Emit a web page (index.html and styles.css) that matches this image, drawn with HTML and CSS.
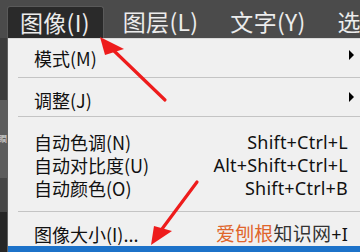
FILE: index.html
```html
<!DOCTYPE html>
<html>
<head>
<meta charset="utf-8">
<link rel="stylesheet" href="styles.css">
</head>
<body>
<div class="screen">
  <div class="menubar">
    <div class="top-item active">图像(I)</div>
    <div class="top-item">图层(L)</div>
    <div class="top-item">文字(Y)</div>
    <div class="top-item">选</div>
  </div>
  <div class="main">
    <div class="sidebar">
      <div class="band b1"></div>
      <div class="band b2"><span class="vtext">瞷</span></div>
      <div class="band b3"></div>
      <div class="band b4"></div>
    </div>
    <div class="menu">
      <div class="row"><span>模式(M)</span><span class="sub"></span></div>
      <div class="sep sep-1"></div>
      <div class="row"><span>调整(J)</span><span class="sub"></span></div>
      <div class="sep sep-2"></div>
      <div class="row"><span>自动色调(N)</span><span class="key">Shift+Ctrl+L</span></div>
      <div class="row"><span>自动对比度(U)</span><span class="key">Alt+Shift+Ctrl+L</span></div>
      <div class="row"><span>自动颜色(O)</span><span class="key">Shift+Ctrl+B</span></div>
      <div class="sep sep-3"></div>
      <div class="row"><span>图像大小(I)...</span><span class="key"><span class="wm-a">爱刨根</span><span class="wm-b">知识网</span>+I</span></div>
      <div class="selected"></div>
    </div>
  </div>
  <svg class="arrows" width="360" height="252" viewBox="0 0 360 252">
    <line x1="165" y1="100" x2="110" y2="47" stroke="#ee1c1c" stroke-width="3.2" stroke-linecap="round"/>
    <polygon points="100,37 105,55 124,49" fill="#ee1c1c"/>
    <line x1="197" y1="182" x2="159" y2="233" stroke="#ee1c1c" stroke-width="3.2" stroke-linecap="round"/>
    <polygon points="151,245 154,226 172,231" fill="#ee1c1c"/>
  </svg>
</div>
</body>
</html>
```

FILE: styles.css
```css
* { box-sizing: border-box; }
html, body { margin: 0; padding: 0; }
body {
  width: 360px;
  height: 252px;
  overflow: hidden;
  background: #3a3a3a;
  font-family: "Noto Sans CJK SC", "Noto Sans", sans-serif;
}
.screen {
  position: relative;
  width: 360px;
  height: 252px;
  display: flex;
  flex-direction: column;
  overflow: hidden;
}
.menubar {
  height: 38px;
  flex: none;
  background: #4b4b4b;
  display: flex;
  align-items: flex-end;
  padding-left: 7px;
  overflow: hidden;
}
.top-item {
  height: 32px;
  line-height: 31px;
  padding: 0 16px;
  font-size: 23px;
  letter-spacing: 0.3px;
  color: #ececec;
  white-space: nowrap;
  flex: none;
}
.top-item.active {
  background: #2a2a2a;
  border: 1px solid #5a5a5a;
  border-bottom: none;
  border-radius: 3px 3px 0 0;
  padding: 0 13px 0 12px;
  margin-right: 3px;
}
.main {
  flex: 1;
  display: flex;
  min-height: 0;
}
.sidebar {
  width: 8px;
  flex: none;
  display: flex;
  flex-direction: column;
  background: #2e2e2e;
  border-right: 1px solid #606060;
}
.band { width: 7px; }
.b1 { height: 62px; background: #3c3c3c; }
.b2 { height: 78px; background: #5c5c5c; display: flex; align-items: center; overflow: hidden; }
.b3 { height: 34px; background: #464646; }
.b4 { flex: 1; background: #262626; }
.vtext { font-size: 8px; color: #dcdcdc; line-height: 1; margin-left: -1px; }
.menu {
  flex: 1;
  background: #f0f0f0;
  border-top: 1px solid #dadada;
  padding-top: 7px;
  display: flex;
  flex-direction: column;
  position: relative;
}
.row {
  height: 23px;
  line-height: 22px;
  display: flex;
  align-items: center;
  justify-content: space-between;
  padding-left: 26px;
  padding-right: 12px;
  font-size: 18px;
  color: #111;
  white-space: nowrap;
  flex: none;
}
.sub {
  width: 0;
  height: 0;
  border-top: 5px solid transparent;
  border-bottom: 5px solid transparent;
  border-left: 5px solid #000;
  margin-right: -6px;
  margin-top: -5px;
}
.key {
  font-family: "Noto Sans", sans-serif;
  font-size: 18px;
  letter-spacing: 0.2px;
  color: #111;
}
.wm-a { color: #e0652c; font-family: "Noto Sans CJK SC", sans-serif; font-size: 19px; }
.wm-b { color: #333; font-family: "Noto Sans CJK SC", sans-serif; font-size: 19px; }
.sep {
  height: 1px;
  background: #c4c4c4;
  margin-left: 10px;
  flex: none;
}
.sep-1 { margin-top: 8px; margin-bottom: 10px; }
.sep-2 { margin-top: 5px; margin-bottom: 13px; }
.sep-3 { margin-top: 12px; margin-bottom: 10px; }
.selected {
  margin-top: 1px;
  height: 8px;
  background: #1c72c9;
  flex: none;
}
.arrows {
  position: absolute;
  left: 0;
  top: 0;
  pointer-events: none;
}
```
